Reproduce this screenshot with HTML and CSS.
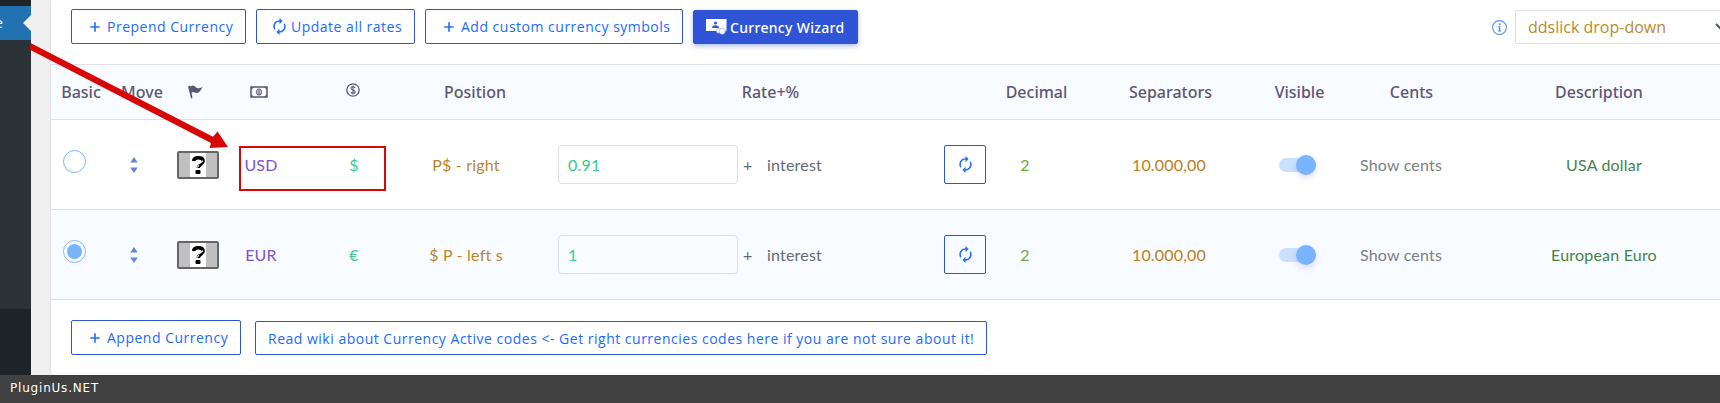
FILE: index.html
```html
<!DOCTYPE html>
<html lang="en">
<head>
    <meta charset="UTF-8">
    <meta name="viewport" content="width=device-width, initial-scale=1.0">
    <title>Currencies</title>
    <link rel="stylesheet" href="styles.css">
</head>
<body>
    <!-- shared icons -->
    <svg class="sprite">
        <symbol id="refresh" viewBox="4 1 16 22">
            <path d="M12 6v3l4-4-4-4v3c-4.420 0-8 3.580-8 8 0 1.570.46 3.030 1.240 4.260L6.700 14.800c-.45-.83-.7-1.790-.7-2.800 0-3.310 2.690-6 6-6zm6.760 1.740L17.300 9.200c.44.84.7 1.790.7 2.800 0 3.310-2.690 6-6 6v-3l-4 4 4 4v-3c4.420 0 8-3.580 8-8 0-1.570-.46-3.030-1.240-4.260z" fill="currentColor"/>
        </symbol>
        <symbol id="plus" viewBox="0 0 10 10">
            <path d="M5 .3v9.400M.3 5h9.400" stroke="currentColor" stroke-width="1.600"/>
        </symbol>
        <symbol id="flag" viewBox="0 0 42 28">
            <rect x="1" y="1" width="40" height="26" rx="1" fill="#c0c0c0" stroke="#666" stroke-width="2"/>
            <path d="M13 2h16v24H13z" fill="#fff"/>
            <path d="M16.500 10c.3-2.600 2.200-3.300 4.800-3.300s4.900 1 4.900 3.500-5 3.400-5 6.800" fill="none" stroke="#000" stroke-width="3.400"/>
            <path d="M21.500 13.300l4.500-3.500M20.300 16.500l1.500-2.200" stroke="#fff" stroke-width="1.100"/>
            <rect x="18.500" y="19" width="5" height="4" rx="1" fill="#000"/>
        </symbol>
    </svg>

    <div class="page">
        <div class="sidebar">
            <div class="menu-current">e</div>
            <div class="submenu"></div>
        </div>

        <div class="panel">
            <div class="toolbar">
                <a class="button icon-plus"><svg><use href="#plus"/></svg>Prepend Currency</a>
                <a class="button icon-refresh update"><svg><use href="#refresh"/></svg>Update all rates</a>
                <a class="button icon-plus add"><svg><use href="#plus"/></svg>Add custom currency symbols</a>
                <a class="button wizard">
                    <svg viewBox="0 0 21 16">
                        <path d="M0 0h20.500v12H0z" fill="#fff"/>
                        <circle cx="9.500" cy="4" r="1.500" fill="#2f54d6"/>
                        <path d="M6 9c0-2 1.500-2.800 3.500-2.800S13 7 13 9z" fill="#2f54d6"/>
                        <circle cx="12.500" cy="11.800" r="2.300" fill="#fff" stroke="#93a8ee" stroke-width=".7"/>
                        <circle cx="16.200" cy="12.300" r="3" fill="#fff" stroke="#93a8ee" stroke-width=".7"/>
                    </svg>Currency Wizard</a>
                <div class="view">
                    <svg class="info" viewBox="0 0 15 15">
                        <circle cx="7.500" cy="7.500" r="6.900" fill="none" stroke="currentColor" stroke-width="1.100"/>
                        <path d="M6.700 3.300h1.700v1.600H6.700zM6 6.200h2.400v4.300h.9v.9H5.800v-.9h1V7.100H6z" fill="currentColor"/>
                    </svg>
                    <div class="select">ddslick drop-down
                        <svg viewBox="0 0 12 8"><path d="M1 1l5 5 5-5" fill="none" stroke="#50575e" stroke-width="2"/></svg>
                    </div>
                </div>
            </div>

            <div class="row head">
                <div>Basic</div>
                <div>Move</div>
                <div>
                    <svg class="i-flag" viewBox="0 0 15 14"><path d="M0 1.500L2 .6l.5 1C5-.5 6.500 1 8 2.500 9.700 4 12 2.800 14.500 2.200 13 4.500 11.500 8 8.500 8 6.300 8 5.500 6 3.500 8L4.500 13l-1.500.4z" fill="currentColor"/></svg>
                </div>
                <div>
                    <svg class="i-money" viewBox="0 0 18 12"><path d="M1 1h16v10H1z" fill="none" stroke="currentColor" stroke-width="1.500"/><path d="M1 1h3L1 4zM17 1h-3l3 3zM1 11h3L1 8zM17 11h-3l3-3z" fill="currentColor"/><ellipse cx="9" cy="6" rx="2.300" ry="3" fill="none" stroke="currentColor" stroke-width="1.100"/><path d="M9 4v4" stroke="currentColor" stroke-width="1.200"/></svg>
                </div>
                <div>
                    <svg class="i-coin" viewBox="0 0 14 14"><circle cx="7" cy="7" r="6.200" fill="none" stroke="currentColor" stroke-width="1.300"/><path d="M9 5C8.600 3.300 5 3.400 5 5.200 5 7.300 9.200 6.600 9.200 8.900 9.200 10.700 5.200 10.800 4.900 8.900M7 2.500v9" fill="none" stroke="currentColor" stroke-width="1.100"/></svg>
                </div>
                <div>Position</div>
                <div>Rate+%</div>
                <div>Decimal</div>
                <div>Separators</div>
                <div>Visible</div>
                <div>Cents</div>
                <div>Description</div>
            </div>

            <div class="row">
                <div class="basic"><span class="radio"></span></div>
                <div class="move"><svg viewBox="0 0 8 16"><path d="M4 0l3.700 5.600H.3zM4 16L.3 10.400h7.400z" fill="currentColor"/></svg></div>
                <div class="flag"><svg><use href="#flag"/></svg></div>
                <div class="code">USD</div>
                <div class="symbol">$</div>
                <div class="position">P$ - right</div>
                <div class="rate">
                    <span class="field">0.91</span>
                    <span class="plus">+</span>
                    <span class="interest">interest</span>
                    <a class="button refresh"><svg><use href="#refresh"/></svg></a>
                </div>
                <div class="decimal">2</div>
                <div class="separators">10.000,00</div>
                <div class="visible"><span class="toggle"></span></div>
                <div class="cents">Show cents</div>
                <div class="description">USA dollar</div>
            </div>

            <div class="row even">
                <div class="basic"><span class="radio checked"></span></div>
                <div class="move"><svg viewBox="0 0 8 16"><path d="M4 0l3.700 5.600H.3zM4 16L.3 10.400h7.400z" fill="currentColor"/></svg></div>
                <div class="flag"><svg><use href="#flag"/></svg></div>
                <div class="code">EUR</div>
                <div class="symbol">€</div>
                <div class="position">$ P - left s</div>
                <div class="rate">
                    <span class="field">1</span>
                    <span class="plus">+</span>
                    <span class="interest">interest</span>
                    <a class="button refresh"><svg><use href="#refresh"/></svg></a>
                </div>
                <div class="decimal">2</div>
                <div class="separators">10.000,00</div>
                <div class="visible"><span class="toggle"></span></div>
                <div class="cents">Show cents</div>
                <div class="description">European Euro</div>
            </div>

            <div class="bottom">
                <a class="button icon-plus append"><svg><use href="#plus"/></svg>Append Currency</a>
                <a class="button wiki">Read wiki about Currency Active codes &lt;- Get right currencies codes here if you are not sure about it!</a>
            </div>
        </div>
    </div>

    <div class="footer">PluginUs.NET</div>

    <!-- annotation over the table -->
    <svg class="arrow" viewBox="0 0 200 106">
        <path d="M2 1.300L184 94.800l4.500-5.300L199 105l-18.500 1 1.500-5L.5 7.500z" fill="#d90606"/>
    </svg>
    <div class="highlight"></div>
</body>
</html>
```
FILE: styles.css
```css
* {
    box-sizing: border-box;
}
body {
    margin: 0;
    height: 403px;
    overflow: hidden;
    background: #f0f0f1;
    font-family: "Noto Sans", sans-serif;
}
.sprite {
    display: none;
}
.page {
    display: flex;
    height: 375px;
}
.sidebar {
    width: 31px;
    margin-right: 20px;
    padding-top: 6px;
    background: #1d2327;
}
.menu-current {
    position: relative;
    height: 34px;
    background: #2271b1;
    color: #fff;
    font: 14px/34px "Open Sans", sans-serif;
    text-indent: -5px;
    overflow: hidden;
}
.menu-current::after {
    content: "";
    position: absolute;
    right: 0;
    top: 9px;
    border: 8px solid transparent;
    border-left: 0;
    border-right-color: #f0f0f1;
}
.submenu {
    height: 269px;
    background: #2c3338;
}
.panel {
    flex: 1;
    min-width: 0;
    overflow: hidden;
    background: #fff;
    box-shadow: 0 0 3px rgba(0,0,0,0.12);
    border-radius: 0 0 0 4px;
}
.toolbar {
    display: flex;
    align-items: flex-end;
    height: 64px;
    padding: 0 0 20px 20px;
}
.button {
    display: flex;
    align-items: center;
    flex: none;
    height: 35px;
    border: 1px solid #2f54d6;
    border-radius: 2px;
    color: #216bff;
    font-family: "Open Sans", sans-serif;
    font-size: 14px;
    letter-spacing: 0.5px;
    white-space: nowrap;
}
.icon-plus {
    width: 175px;
    padding-left: 18px;
}
.icon-plus svg {
    width: 10px;
    height: 10px;
    margin-right: 7px;
}
.update {
    width: 159px;
    margin-left: 10px;
    padding-left: 16px;
}
.icon-refresh svg {
    width: 13px;
    height: 17px;
    margin-right: 5px;
}
.add {
    width: 258px;
    margin-left: 10px;
}
.wizard {
    width: 165px;
    height: 34px;
    margin-left: 10px;
    padding-left: 12px;
    background: #2f54d6;
    color: #fff;
    font-family: "Noto Sans", sans-serif;
    font-weight: 500;
    letter-spacing: 0.3px;
    box-shadow: 0 2px 5px rgba(47,84,214,0.4);
}
.wizard svg {
    width: 21px;
    height: 16px;
    margin-right: 3px;
}
.view {
    display: flex;
    align-items: center;
    margin-left: 634px;
}
.info {
    flex: none;
    width: 15px;
    height: 15px;
    margin-right: 8px;
    color: #5b8def;
}
.select {
    display: flex;
    align-items: center;
    flex: none;
    width: 220px;
    height: 34px;
    padding-left: 12px;
    border: 1px solid #dcdfe6;
    border-radius: 2px;
    color: #b88a2b;
    font: 16px "Open Sans", sans-serif;
    white-space: nowrap;
}
.select svg {
    width: 12px;
    height: 8px;
    margin-left: 49px;
}
.row {
    display: grid;
    grid-template-columns: 60px 62px 44px 84px 104px 140px 451px 81px 187px 71px 153px 222px;
    height: 90px;
    border-bottom: 1px solid #dcdfe6;
    font-family: Lato, sans-serif;
    font-size: 16px;
    letter-spacing: 0.2px;
}
.row > div {
    display: flex;
    align-items: center;
    justify-content: center;
    white-space: nowrap;
}
.head {
    height: 56px;
    border-top: 1px solid #dcdfe6;
    background: #f8fbff;
    color: #5d5776;
    font-family: "Noto Sans", sans-serif;
    font-weight: 500;
    letter-spacing: 0;
}
.even {
    background: #f8fbff;
}
.i-flag {
    width: 15px;
    height: 14px;
}
.i-money {
    width: 18px;
    height: 12px;
}
.i-coin {
    width: 14px;
    height: 14px;
    margin-bottom: 4px;
}
.row .basic {
    justify-content: flex-start;
    padding: 0 0 6px 12px;
}
.radio {
    display: flex;
    width: 23px;
    height: 23px;
    padding: 3px;
    border: 1px solid #79b5ff;
    border-radius: 50%;
    background: #fff;
}
.checked::after {
    content: "";
    flex: 1;
    border-radius: 50%;
    background: #79b5ff;
}
.move {
    padding-right: 16px;
    color: #6583dc;
}
.move svg {
    width: 8px;
    height: 16px;
}
.row .flag {
    justify-content: flex-start;
    padding-left: 4px;
}
.flag svg {
    flex: none;
    width: 42px;
    height: 28px;
}
.code {
    padding-left: 4px;
    color: #7b52cf;
}
.symbol {
    padding-left: 2px;
    color: #44c98a;
}
.position {
    padding-right: 18px;
    color: #b8872b;
}
.row .rate {
    justify-content: flex-start;
    padding-left: 13px;
    color: #636b78;
}
.field {
    width: 180px;
    height: 39px;
    padding-left: 9px;
    border: 1px solid #dcdfe6;
    border-radius: 4px;
    color: #36c98f;
    line-height: 37px;
}
.plus {
    width: 29px;
    padding-left: 5px;
}
.interest {
    width: 177px;
}
.refresh {
    justify-content: center;
    width: 42px;
    height: 39px;
}
.refresh svg {
    width: 13px;
    height: 17px;
}
.decimal {
    padding-right: 23px;
    color: #78a53b;
}
.separators {
    padding-right: 3px;
    color: #b8801c;
}
.row .visible {
    justify-content: flex-start;
    padding-left: 15px;
}
.toggle {
    display: flex;
    align-items: center;
    justify-content: flex-end;
    width: 37px;
    height: 14px;
    border-radius: 7px;
    background: #c9e1ff;
}
.toggle::after {
    content: "";
    width: 20px;
    height: 20px;
    flex: none;
    border-radius: 50%;
    background: #79b5ff;
    box-shadow: 0 3px 6px rgba(110,80,220,0.2);
}
.cents {
    padding-right: 21px;
    color: #7b7f85;
}
.description {
    padding-left: 10px;
    color: #46834a;
}
.bottom {
    display: flex;
    align-items: flex-end;
    height: 55px;
    padding-left: 20px;
}
.append {
    width: 170px;
}
.wiki {
    width: 732px;
    height: 34px;
    margin-left: 14px;
    padding-left: 12px;
}
.footer {
    height: 28px;
    padding-left: 10px;
    background: #404040;
    color: #fff;
    font: 12px/27px "DejaVu Sans", sans-serif;
    letter-spacing: 0.8px;
}
.arrow {
    position: absolute;
    left: 29px;
    top: 42px;
    width: 200px;
    height: 106px;
}
.highlight {
    position: absolute;
    left: 239px;
    top: 146px;
    width: 147px;
    height: 45px;
    border: 2px solid #d90606;
}
```
